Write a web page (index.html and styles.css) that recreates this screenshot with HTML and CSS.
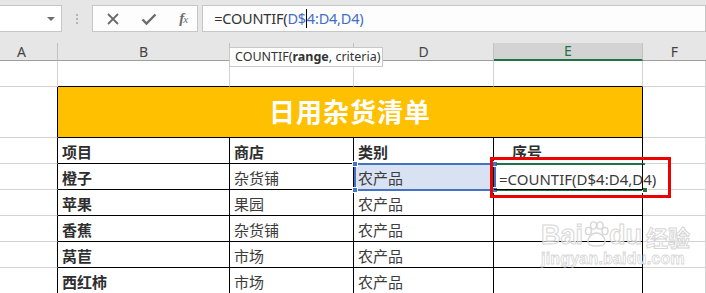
FILE: index.html
```html
<!DOCTYPE html>
<html>
<head>
<meta charset="utf-8">
<link rel="stylesheet" href="styles.css">
</head>
<body>
<div class="app">
  <div class="toolbar">
    <div class="namebox"><span class="caret"></span></div>
    <div class="grip"><i></i><i></i><i></i></div>
    <div class="fbtns">
      <svg class="ico" width="14" height="14" viewBox="0 0 14 14"><path d="M2 2 L12 12 M12 2 L2 12" stroke="#6b6b6b" stroke-width="1.8" fill="none"/></svg>
      <svg class="ico" width="16" height="14" viewBox="0 0 16 14"><path d="M1.5 7.5 L5.5 11.5 L14.5 2.5" stroke="#6b6b6b" stroke-width="2.4" fill="none"/></svg>
      <span class="fx"><i>f</i><i class="x">x</i></span>
    </div>
    <div class="finput">=COUNTIF(<span class="ref">D$</span><span class="cursor"></span><span class="ref">4:D4,D4)</span></div>
  </div>

  <div class="sheet">
    <div class="ch ca">A</div>
    <div class="ch">B</div>
    <div class="ch"></div>
    <div class="ch">D</div>
    <div class="ch active">E</div>
    <div class="ch">F</div>

    <div class="c"></div>
    <div class="c tb"></div>
    <div class="c tb"></div>
    <div class="c tb"></div>
    <div class="c tb"></div>
    <div class="c"></div>

    <div class="c ta"></div>
    <div class="c title">日用杂货清单</div>
    <div class="c"></div>

    <div class="c ta"></div>
    <div class="c t b">项目</div>
    <div class="c t b">商店</div>
    <div class="c t b">类别</div>
    <div class="c t b seq">序号</div>
    <div class="c"></div>

    <div class="c ta"></div>
    <div class="c t b">橙子</div>
    <div class="c t">杂货铺</div>
    <div class="c t sel">农产品</div>
    <div class="c t edit">=COUNTIF(D$4:D4,D4)</div>
    <div class="c"></div>

    <div class="c ta"></div>
    <div class="c t b">苹果</div>
    <div class="c t">果园</div>
    <div class="c t">农产品</div>
    <div class="c t"></div>
    <div class="c"></div>

    <div class="c ta"></div>
    <div class="c t b">香蕉</div>
    <div class="c t">杂货铺</div>
    <div class="c t">农产品</div>
    <div class="c t"></div>
    <div class="c"></div>

    <div class="c ta"></div>
    <div class="c t b">莴苣</div>
    <div class="c t">市场</div>
    <div class="c t">农产品</div>
    <div class="c t"></div>
    <div class="c"></div>

    <div class="c ta"></div>
    <div class="c t b">西红柿</div>
    <div class="c t">市场</div>
    <div class="c t">农产品</div>
    <div class="c t"></div>
    <div class="c"></div>
  </div>

  <div class="tooltip">COUNTIF(<b>range</b>, criteria)</div>

  <div class="selbox">
    <span class="h h1"></span><span class="h h2"></span><span class="h h3"></span><span class="h h4"></span>
  </div>
  <div class="editbox"><span class="fill"></span></div>
  <div class="redbox"></div>

  <div class="watermark">
    <div class="wm1">Bai<svg width="26" height="26" viewBox="0 0 26 26"><g fill="none" stroke="#d6d6d6" stroke-width="1.4"><ellipse cx="5.5" cy="10" rx="3" ry="3.6"/><ellipse cx="10.5" cy="4.5" rx="3" ry="3.6"/><ellipse cx="17" cy="4.5" rx="3" ry="3.6"/><ellipse cx="22" cy="10" rx="3" ry="3.6"/><path d="M5 21 C5 15 10 12 13.5 12 C17 12 22 15 22 21 C22 24 19 25 13.5 25 C8 25 5 24 5 21 Z"/></g></svg>du<span class="wmcn">经验</span></div>
    <div class="wm2">jingyan.baidu.com</div>
  </div>
</div>
</body>
</html>
```

FILE: styles.css
```css
* { box-sizing: border-box; }
html, body { margin: 0; padding: 0; }
body {
  width: 706px;
  height: 293px;
  overflow: hidden;
  background: #ffffff;
  font-family: "Noto Sans", "Noto Sans CJK SC", sans-serif;
}
.app { position: relative; width: 706px; height: 293px; overflow: hidden; }

.toolbar {
  height: 43px;
  background: #e6e6e6;
  display: flex;
  align-items: flex-start;
  padding-top: 5px;
}
.namebox {
  width: 64px;
  height: 27px;
  background: #ffffff;
  border: 1px solid #c6c6c6;
  border-left: none;
  display: flex;
  align-items: center;
  justify-content: flex-end;
  padding-right: 6px;
}
.caret {
  width: 0; height: 0;
  border-left: 4px solid transparent;
  border-right: 4px solid transparent;
  border-top: 4px solid #6d6d6d;
}
.grip {
  width: 31px;
  height: 27px;
  display: flex;
  flex-direction: column;
  align-items: center;
  justify-content: center;
  gap: 2px;
}
.grip i { display: block; width: 2px; height: 2px; background: #b4b4b4; }
.fbtns {
  width: 109px;
  height: 27px;
  background: #fdfdfd;
  border: 1px solid #c6c6c6;
  display: flex;
  align-items: center;
  padding-left: 13px;
}
.fbtns .ico:nth-child(1) { margin-right: 21px; }
.fbtns .ico:nth-child(2) { margin-right: 22px; }
.fx {
  font-family: "Liberation Serif", serif;
  font-style: italic;
  color: #6b6b6b;
  font-size: 15px;
  font-weight: bold;
  letter-spacing: -1px;
}
.fx .x { font-size: 11px; font-weight: normal; }
.fx i { font-style: italic; }
.finput {
  margin-left: 4px;
  width: 520px;
  height: 27px;
  background: #fdfdfd;
  border: 1px solid #c6c6c6;
  padding-left: 11px;
  font-size: 14.5px;
  line-height: 25px;
  color: #333333;
  white-space: nowrap;
  letter-spacing: -0.2px;
}
.finput .ref { color: #3f6fc6; }
.cursor {
  display: inline-block;
  width: 1px;
  height: 19px;
  background: #000;
  vertical-align: -4px;
}

.sheet {
  display: grid;
  grid-template-columns: 58px 172px 124px 140px 149px 63px;
  grid-template-rows: 18px 26px 51px 26px 26px 26px 26px 26px 26px;
}
.ch {
  background: #e6e6e6;
  border-right: 1px solid #c0c0c0;
  border-bottom: 1px solid #9e9e9e;
  font-size: 14px;
  color: #444444;
  display: flex;
  align-items: center;
  justify-content: center;
  line-height: 16px;
}
.ch:nth-child(6) { border-right: none; }
.ch.ca { padding-right: 14px; }
.ch.active {
  background: #d3d3d3;
  border-bottom: 2px solid #217346;
  color: #217346;
}
.c {
  border-right: 1px solid #d4d4d4;
  border-bottom: 1px solid #d4d4d4;
  font-family: "Noto Sans", "Noto Sans CJK SC", sans-serif;
  font-size: 15px;
  color: #3c3c3c;
  display: flex;
  align-items: flex-end;
  padding-left: 4px;
  padding-bottom: 1px;
  line-height: 20px;
  white-space: nowrap;
}
.c.tb { border-bottom: 1px solid #000; }
.c.ta { border-right: 1px solid #000; }
.c.t { border-right: 1px solid #000; border-bottom: 1px solid #000; }
.c.b { font-weight: 700; color: #2e2e2e; }
.c.seq { padding-left: 18px; }
.c.title {
  grid-column: 2 / span 4;
  background: #ffc000;
  border-right: 1px solid #000;
  border-bottom: 1px solid #000;
  color: #ffffff;
  font-weight: 700;
  font-size: 26px;
  justify-content: center;
  align-items: center;
  padding: 0 0 1px 0;
  letter-spacing: 1px;
}
.c.sel { background: #d9e2f3; }
.c.edit {
  font-family: "Noto Sans", sans-serif;
  font-size: 15px;
  color: #3a3a3a;
  padding-left: 5px;
  padding-bottom: 0;
  z-index: 2;
}

.tooltip {
  position: absolute;
  left: 229px;
  top: 47px;
  width: 154px;
  height: 20px;
  background: #ffffff;
  border: 1px solid #c8c8c8;
  font-size: 12.5px;
  line-height: 18px;
  padding-left: 5px;
  color: #333333;
  white-space: nowrap;
}
.tooltip b { font-weight: 700; }

.selbox {
  position: absolute;
  left: 354px;
  top: 163px;
  width: 142px;
  height: 28px;
  border: 2px solid #4472c4;
  pointer-events: none;
}
.selbox .h {
  position: absolute;
  width: 6px;
  height: 6px;
  background: #4472c4;
  border: 1px solid #ffffff;
}
.h1 { left: -4px; top: -4px; }
.h2 { right: -4px; top: -4px; }
.h3 { left: -4px; bottom: -4px; }
.h4 { right: -4px; bottom: -4px; }

.editbox {
  position: absolute;
  left: 496px;
  top: 163px;
  width: 149px;
  height: 28px;
  border-top: 2px solid #217346;
  border-bottom: 2px solid #217346;
  pointer-events: none;
}
.editbox .fill {
  position: absolute;
  right: -3px;
  bottom: -4px;
  width: 6px;
  height: 6px;
  background: #217346;
  border: 1px solid #fff;
}
.redbox {
  position: absolute;
  left: 490px;
  top: 157px;
  width: 181px;
  height: 41px;
  border: 3px solid #ec0000;
}

.watermark {
  position: absolute;
  left: 541px;
  top: 220px;
  width: 160px;
  white-space: nowrap;
  pointer-events: none;
}
.wm1 {
  font-family: "Liberation Sans", sans-serif;
  font-size: 27px;
  font-weight: 700;
  line-height: 30px;
  display: flex;
  align-items: flex-end;
  -webkit-text-stroke: 1px #d6d6d6;
  color: rgba(255,255,255,0.6);
}
.wm1 svg { margin: 0 0 3px 0; }
.wmcn {
  font-family: "Noto Sans CJK SC", sans-serif;
  font-size: 22px;
  margin-left: 4px;
  line-height: 28px;
}
.wm2 {
  font-family: "Liberation Sans", sans-serif;
  font-size: 16px;
  line-height: 18px;
  -webkit-text-stroke: 0.8px #d6d6d6;
  color: rgba(255,255,255,0.6);
  font-weight: 700;
  letter-spacing: 0.2px;
}
```
